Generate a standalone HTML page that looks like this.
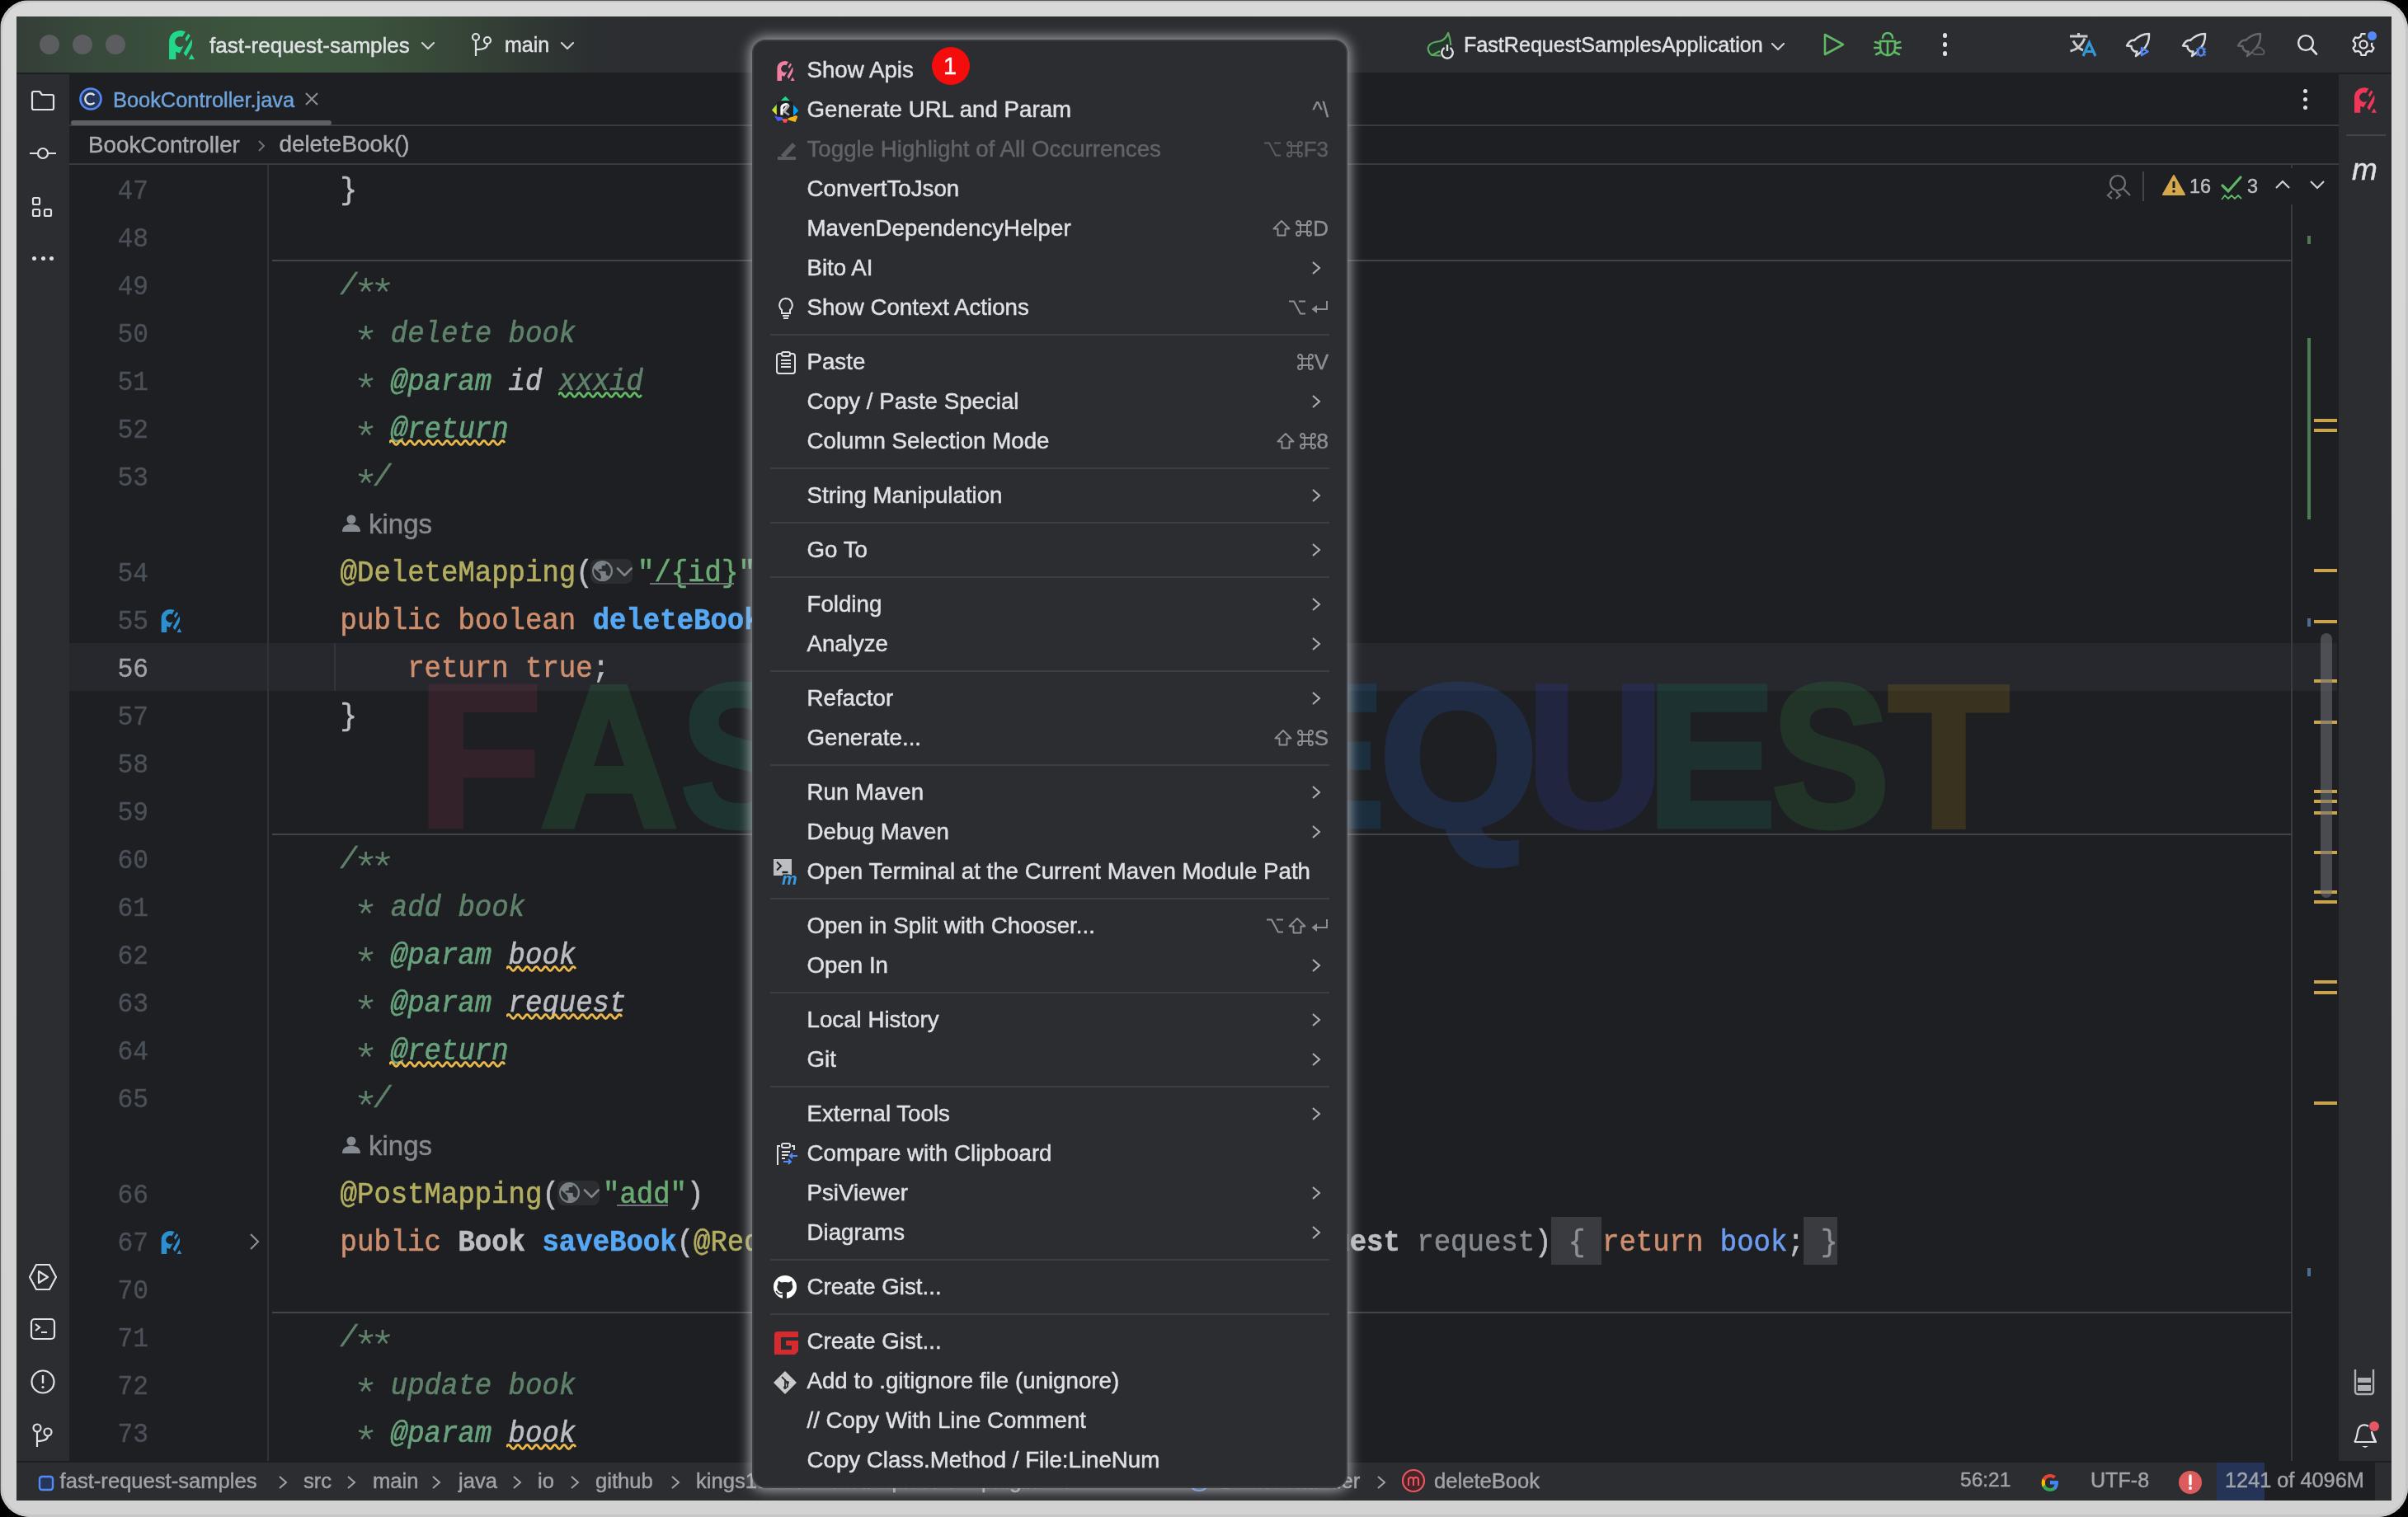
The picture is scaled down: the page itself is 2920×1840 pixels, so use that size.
<!DOCTYPE html>
<html><head><meta charset="utf-8"><style>
html,body{margin:0;padding:0;}
body{width:2920px;height:1840px;position:relative;overflow:hidden;background:#000;}
.r,.t,.s{position:absolute;}
#root{position:absolute;left:0;top:0;width:2920px;height:1840px;will-change:transform;}
.t{white-space:pre;line-height:1;-webkit-text-stroke-width:0.45px;}
.code{font-family:'Liberation Mono', monospace;font-size:36px;-webkit-text-stroke-width:0.6px;transform:scaleX(0.9443);transform-origin:0 0;}
</style></head><body><div id="root">
<div class="r" style="left:0;top:0;width:2920px;height:1840px;border-radius:36px;background:linear-gradient(#d8d8d8,#d2d2d2);box-shadow:inset 0 0 0 3px #c6c6c6"></div>
<div class="r" style="left:0px;top:0px;width:2920px;height:1px;background:rgba(0,0,0,0.55);"></div>
<div class="r" style="left:0px;top:0px;width:1px;height:1840px;background:rgba(0,0,0,0.55);"></div>
<div class="r" style="left:20px;top:20px;width:2880px;height:1800px;background:#1e1f22;"></div>
<div class="r" style="left:20px;top:20px;width:2880px;height:68px;background:linear-gradient(to right,#343e37 0px,#384a3b 100px,#3d573f 330px,#3b523d 430px,#374637 530px,#303934 620px,#2c2f31 700px,#2b2d30 760px,#2b2d30 100%)"></div>
<div class="r" style="left:20px;top:88px;width:2880px;height:2px;background:#1e1f22;"></div>
<div class="r" style="left:48px;top:42px;width:24px;height:24px;border-radius:50%;background:#5c5d60"></div>
<div class="r" style="left:88px;top:42px;width:24px;height:24px;border-radius:50%;background:#5c5d60"></div>
<div class="r" style="left:128px;top:42px;width:24px;height:24px;border-radius:50%;background:#5c5d60"></div>
<svg class="s" style="left:205px;top:37px" width="31" height="35" viewBox="0 0 30 34"><path fill="#21d789" d="M0 34 V13 C0 5 6 0 14 0 L19.3 1.3 L15.6 7.5 A6.2 6.2 0 1 0 17.2 17.8 L12.4 26.6 L8 25 V34 Z"/><path fill="#21d789" d="M22.6 3.7 L24.9 6 L20.6 13 L18.8 9.8 Z"/><path fill="#21d789" d="M26.6 10.1 C27.6 13 27.3 17 26 20 L20 30.7 L17.1 26.6 Z"/><path fill="#21d789" d="M23 34 L26.5 27.8 L30 34 Z"/></svg>
<div class="t" style="left:254.0px;top:41.5px;font-family:'Liberation Sans', sans-serif;font-size:26px;color:#dfe1e5;">fast-request-samples</div>
<svg class="s" style="left:511px;top:51px" width="16" height="9" viewBox="0 0 16 9"><path d="M1 1 L8.0 8 L15 1" fill="none" stroke="#cfd1d5" stroke-width="2.2" stroke-linecap="round" stroke-linejoin="round"/></svg>
<svg class="s" style="left:571px;top:39px" width="26" height="30" viewBox="0 0 26 30"><g fill="none" stroke="#dfe1e5" stroke-width="2.2"><circle cx="6" cy="6" r="4"/><circle cx="20" cy="10" r="4"/><path d="M6 10 V29 M20 14 C20 20 14 21 6 21"/></g></svg>
<div class="t" style="left:612.0px;top:42.3px;font-family:'Liberation Sans', sans-serif;font-size:25px;color:#dfe1e5;">main</div>
<svg class="s" style="left:680px;top:51px" width="16" height="9" viewBox="0 0 16 9"><path d="M1 1 L8.0 8 L15 1" fill="none" stroke="#cfd1d5" stroke-width="2.2" stroke-linecap="round" stroke-linejoin="round"/></svg>
<svg class="s" style="left:1725px;top:34px" width="50" height="42" viewBox="0 0 50 42"><path d="M11.5 33 C6 29 6 24 8 21 C11 17 16 16.5 21 16 C26 15 29 11 31.2 6 C33 11 34 16 34 21 L30 24 L22 28 C18 30 14 31.5 11.5 33 Z" fill="#22382a"/><path d="M22 33.5 L11.5 33 C6 29 6 24 8 21 C11 17 16 16.5 21 16 C26 15 29 11 31.2 6 C33 11 34 16 34.3 21" fill="none" stroke="#5fa864" stroke-width="2.2" stroke-linejoin="round"/><path d="M11.5 33 C15 31 18 29.5 21 28" fill="none" stroke="#5fa864" stroke-width="2.2"/><path d="M26.6 24 A6.8 6.8 0 1 0 33.4 24" fill="none" stroke="#dfe1e5" stroke-width="2.4"/><path d="M30 20 V28" stroke="#dfe1e5" stroke-width="2.4"/></svg>
<div class="t" style="left:1775.0px;top:42.2px;font-family:'Liberation Sans', sans-serif;font-size:25.1px;color:#dfe1e5;">FastRequestSamplesApplication</div>
<svg class="s" style="left:2148px;top:52px" width="16" height="9" viewBox="0 0 16 9"><path d="M1 1 L8.0 8 L15 1" fill="none" stroke="#cfd1d5" stroke-width="2.2" stroke-linecap="round" stroke-linejoin="round"/></svg>
<svg class="s" style="left:2209px;top:39px" width="30" height="30" viewBox="0 0 30 30"><path d="M4 3 L26 15 L4 27 Z" fill="none" stroke="#5fb865" stroke-width="2.6" stroke-linejoin="round"/></svg>
<svg class="s" style="left:2272px;top:38px" width="34" height="32" viewBox="0 0 34 32"><g fill="none" stroke="#5fb865" stroke-width="2.6" stroke-linecap="round"><path d="M11 8 A6 6 0 0 1 23 8"/><path d="M8 12 H26 V20 A9 9 0 0 1 8 20 Z"/><path d="M2 13 L8 15 M32 13 L26 15 M1 20 H8 M33 20 H26 M3 28 L9 25 M31 28 L25 25 M17 12 V29"/></g></svg>
<div class="r" style="left:2355.5px;top:40.2px;width:5.6px;height:5.6px;border-radius:50%;background:#dfe1e5"></div>
<div class="r" style="left:2355.5px;top:51.2px;width:5.6px;height:5.6px;border-radius:50%;background:#dfe1e5"></div>
<div class="r" style="left:2355.5px;top:62.2px;width:5.6px;height:5.6px;border-radius:50%;background:#dfe1e5"></div>
<svg class="s" style="left:2500px;top:32px" width="260" height="44" viewBox="0 0 260 44"><g fill="none" stroke="#c9cacd" stroke-width="3"><path d="M10 12 H31.5 M20.5 8 V12 M14 17.5 C17 23 21 27 26 29 M28 14.5 C25 22 19 28 10.5 30"/></g><path d="M26 36 L33.5 19.5 L41 36 M29 30.5 H38" fill="none" stroke="#3399d6" stroke-width="3.2"/><g fill="none" stroke-width="2.5" stroke-linejoin="round"><path d="M106 9 C100 9 93 12 88 17 C85 16 82 18 79 23.5 L84.5 24 L85 27 C87 30 89 31 91.5 30.5 L90 36 C94 33 96.5 31 97 30 C103 25 106.5 17 106 9 Z" stroke="#d7d8db"/><path d="M97 26 L104.5 30.5 L97 35 Z" stroke="#548af7"/><path d="M174 9 C168 9 161 12 156 17 C153 16 150 18 147 23.5 L152.5 24 L153 27 C155 30 157 31 159.5 30.5 L158 36 C162 33 164.5 31 165 30 C171 25 174.5 17 174 9 Z" stroke="#d7d8db"/><path d="M241 9 C235 9 228 12 223 17 C220 16 217 18 214 23.5 L219.5 24 L220 27 C222 30 224 31 226.5 30.5 L225 36 C229 33 231.5 31 232 30 C238 25 241.5 17 241 9 Z" stroke="#64666a"/></g><ellipse cx="169" cy="30.8" rx="3.5" ry="4.8" fill="#2b2d30" stroke="#548af7" stroke-width="2.2"/><path d="M163.3 27.5 H165.5 M163.3 31 H165.5 M163.3 34.5 H165.5 M172.5 27.5 H174.7 M172.5 31 H174.7 M172.5 34.5 H174.7 M166.5 24.8 L167.6 26.2 M171.5 24.8 L170.4 26.2" stroke="#548af7" stroke-width="1.8"/><path d="M234 34 H243 A3 3 0 0 0 243.5 28.2 A4.8 4.8 0 0 0 235 27.8 A3.2 3.2 0 0 0 234 34 Z" fill="#2b2d30" stroke="#58595d" stroke-width="2"/></svg>
<svg class="s" style="left:2776px;top:32px" width="40" height="44" viewBox="0 0 40 44"><circle cx="20" cy="20" r="8.9" fill="none" stroke="#dfe1e5" stroke-width="2.4"/><path d="M26.5 26.5 L33 33.5" stroke="#dfe1e5" stroke-width="2.6" stroke-linecap="round"/></svg>
<svg class="s" style="left:2850px;top:38px" width="32" height="32" viewBox="0 0 32 32"><path d="M12.51 6.42 L13.48 3.04 L18.52 3.04 L19.49 6.42 L22.56 8.19 L25.96 7.34 L28.48 11.70 L26.05 14.23 L26.05 17.77 L28.48 20.30 L25.96 24.66 L22.56 23.81 L19.49 25.58 L18.52 28.96 L13.48 28.96 L12.51 25.58 L9.44 23.81 L6.04 24.66 L3.52 20.30 L5.95 17.77 L5.95 14.23 L3.52 11.70 L6.04 7.34 L9.44 8.19 Z" fill="none" stroke="#dfe1e5" stroke-width="2.3" stroke-linejoin="round"/><circle cx="16" cy="16" r="4.6" fill="none" stroke="#dfe1e5" stroke-width="2.3"/></svg>
<div class="r" style="left:2868px;top:35px;width:17px;height:17px;border-radius:50%;background:#2b2d30"></div>
<div class="r" style="left:2870.8px;top:37.9px;width:11.2px;height:11.2px;border-radius:50%;background:#548af7"></div>
<div class="r" style="left:20px;top:90px;width:64px;height:1682px;background:#2b2d30;"></div>
<div class="r" style="left:2836px;top:90px;width:64px;height:1682px;background:#2b2d30;"></div>
<svg class="s" style="left:36px;top:108px" width="32" height="28" viewBox="0 0 32 28"><path d="M3 5 A2 2 0 0 1 5 3 H12 L15 7 H27 A2 2 0 0 1 29 9 V23 A2 2 0 0 1 27 25 H5 A2 2 0 0 1 3 23 Z" fill="none" stroke="#dfe1e5" stroke-width="2.2" stroke-linejoin="round"/></svg>
<svg class="s" style="left:34px;top:176px" width="36" height="20" viewBox="0 0 36 20"><circle cx="18" cy="10" r="6" fill="none" stroke="#dfe1e5" stroke-width="2.2"/><path d="M2 10 H12 M24 10 H34" stroke="#dfe1e5" stroke-width="2.2"/></svg>
<svg class="s" style="left:37px;top:237px" width="30" height="30" viewBox="0 0 30 30"><g fill="none" stroke="#dfe1e5" stroke-width="2.2"><rect x="3" y="3" width="8" height="8" rx="1.5"/><rect x="3" y="17" width="8" height="8" rx="1.5"/><rect x="17" y="17" width="8" height="8" rx="1.5"/></g></svg>
<div class="r" style="left:38.5px;top:311px;width:5px;height:5px;border-radius:50%;background:#dfe1e5"></div>
<div class="r" style="left:49.5px;top:311px;width:5px;height:5px;border-radius:50%;background:#dfe1e5"></div>
<div class="r" style="left:59.5px;top:311px;width:5px;height:5px;border-radius:50%;background:#dfe1e5"></div>
<svg class="s" style="left:34px;top:1532px" width="36" height="34" viewBox="0 0 36 34"><path d="M10 2 H26 L34 17 L26 32 H10 L2 17 Z" fill="none" stroke="#dfe1e5" stroke-width="2.2" stroke-linejoin="round"/><path d="M13 10 L24 17 L13 24 Z" fill="none" stroke="#dfe1e5" stroke-width="2.2" stroke-linejoin="round"/></svg>
<svg class="s" style="left:36px;top:1598px" width="32" height="28" viewBox="0 0 32 28"><rect x="2" y="2" width="28" height="24" rx="4" fill="none" stroke="#dfe1e5" stroke-width="2.2"/><path d="M7 8 L12 12 L7 16 M14 18 H21" fill="none" stroke="#dfe1e5" stroke-width="2.2"/></svg>
<svg class="s" style="left:36px;top:1660px" width="32" height="32" viewBox="0 0 32 32"><circle cx="16" cy="16" r="13.5" fill="none" stroke="#dfe1e5" stroke-width="2.2"/><path d="M16 8 V18" stroke="#dfe1e5" stroke-width="2.4"/><circle cx="16" cy="22.5" r="1.6" fill="#dfe1e5"/></svg>
<svg class="s" style="left:38px;top:1725px" width="28" height="32" viewBox="0 0 28 32"><g fill="none" stroke="#dfe1e5" stroke-width="2.2"><circle cx="7" cy="7" r="4.5"/><circle cx="20" cy="12" r="4.5"/><path d="M7 11.5 V30 M20 16.5 C20 22 14 23 7 23"/></g></svg>
<svg class="s" style="left:2855px;top:106px" width="27" height="31" viewBox="0 0 30 34"><path fill="#f0365a" d="M0 34 V13 C0 5 6 0 14 0 L19.3 1.3 L15.6 7.5 A6.2 6.2 0 1 0 17.2 17.8 L12.4 26.6 L8 25 V34 Z"/><path fill="#f0365a" d="M22.6 3.7 L24.9 6 L20.6 13 L18.8 9.8 Z"/><path fill="#f0365a" d="M26.6 10.1 C27.6 13 27.3 17 26 20 L20 30.7 L17.1 26.6 Z"/><path fill="#f0365a" d="M23 34 L26.5 27.8 L30 34 Z"/></svg>
<div class="r" style="left:2845px;top:163px;width:48px;height:2px;background:#43454a;"></div>
<div class="t" style="left:2852.0px;top:186.7px;font-family:'Liberation Sans', sans-serif;font-size:37px;color:#dfe1e5;font-style:italic">m</div>
<svg class="s" style="left:2852px;top:1659px" width="30" height="34" viewBox="0 0 30 34"><path d="M4 2 V29 A3 3 0 0 0 7 32 H23 A3 3 0 0 0 26 29 V2" fill="none" stroke="#aeb0b5" stroke-width="2.4"/><rect x="7" y="12" width="16" height="6" fill="#aeb0b5"/><rect x="7" y="21" width="16" height="7" fill="#aeb0b5"/></svg>
<svg class="s" style="left:2850px;top:1723px" width="36" height="36" viewBox="0 0 36 36"><path d="M5 26 C9 21 8 14 10 10 C12 5 18 4 22 7 M26 14 C27 20 28 23 31 26 Z M5 26 H31" fill="none" stroke="#dfe1e5" stroke-width="2.2" stroke-linejoin="round"/><path d="M14 31 H22 L18 33 Z" fill="#dfe1e5"/></svg>
<div class="r" style="left:2873px;top:1724px;width:12px;height:12px;border-radius:50%;background:#e55765"></div>
<div class="r" style="left:84px;top:151px;width:2752px;height:2px;background:#393b40;"></div>
<div class="r" style="left:86px;top:146px;width:316px;height:6px;border-radius:3px;background:#5d5f64"></div>
<svg class="s" style="left:95px;top:105px" width="30" height="30" viewBox="0 0 30 30"><circle cx="15" cy="15" r="12.5" fill="#253658" stroke="#548af7" stroke-width="2.6"/><path d="M19.5 10.5 A6.5 6.5 0 1 0 19.5 19.5" fill="none" stroke="#dfe1e5" stroke-width="2.4"/></svg>
<div class="t" style="left:137.0px;top:109.0px;font-family:'Liberation Sans', sans-serif;font-size:25.4px;color:#6fa3dc;">BookController.java</div>
<svg class="s" style="left:369px;top:111px" width="18" height="18" viewBox="0 0 18 18"><path d="M2 2 L16 16 M16 2 L2 16" stroke="#8c8f94" stroke-width="2"/></svg>
<div class="r" style="left:2793px;top:107.5px;width:5px;height:5px;border-radius:50%;background:#dfe1e5"></div>
<div class="r" style="left:2793px;top:117.5px;width:5px;height:5px;border-radius:50%;background:#dfe1e5"></div>
<div class="r" style="left:2793px;top:127.5px;width:5px;height:5px;border-radius:50%;background:#dfe1e5"></div>
<div class="t" style="left:107.0px;top:161.5px;font-family:'Liberation Sans', sans-serif;font-size:27.8px;color:#a9abb0;">BookController</div>
<svg class="s" style="left:311px;top:168px" width="12" height="18" viewBox="0 0 12 18"><path d="M3 3 L9 9 L3 15" fill="none" stroke="#6f7277" stroke-width="2"/></svg>
<div class="t" style="left:338.4px;top:161.4px;font-family:'Liberation Sans', sans-serif;font-size:27.9px;color:#a9abb0;">deleteBook()</div>
<div class="r" style="left:84px;top:198px;width:2752px;height:2px;background:#393b40;"></div>
<div class="r" style="left:84px;top:780px;width:2750px;height:58px;background:#26282e;"></div>
<div class="t" style="left:506px;top:793px;font-family:'Liberation Sans', sans-serif;font-weight:bold;font-size:254px;color:rgb(168,50,84);-webkit-text-stroke:7px rgb(168,50,84);opacity:0.16;transform:scale(0.970,0.967);transform-origin:13px 36px">F</div>
<div class="t" style="left:655px;top:793px;font-family:'Liberation Sans', sans-serif;font-weight:bold;font-size:254px;color:rgb(49,162,78);-webkit-text-stroke:7px rgb(49,162,78);opacity:0.16;transform:scale(0.911,0.967);transform-origin:1px 36px">A</div>
<div class="t" style="left:825px;top:793px;font-family:'Liberation Sans', sans-serif;font-weight:bold;font-size:254px;color:rgb(24,162,122);-webkit-text-stroke:7px rgb(24,162,122);opacity:0.16;transform:scale(0.843,0.967);transform-origin:3px 36px">S</div>
<div class="t" style="left:976px;top:793px;font-family:'Liberation Sans', sans-serif;font-weight:bold;font-size:254px;color:rgb(30,150,165);-webkit-text-stroke:7px rgb(30,150,165);opacity:0.16;transform:scale(0.942,0.967);transform-origin:-1px 36px">T</div>
<div class="t" style="left:1127px;top:793px;font-family:'Liberation Sans', sans-serif;font-weight:bold;font-size:254px;color:rgb(30,118,196);-webkit-text-stroke:7px rgb(30,118,196);opacity:0.16;transform:scale(0.941,0.967);transform-origin:13px 36px">R</div>
<div class="t" style="left:1522px;top:793px;font-family:'Liberation Sans', sans-serif;font-weight:bold;font-size:254px;color:rgb(11,125,209);-webkit-text-stroke:7px rgb(11,125,209);opacity:0.16;transform:scale(0.926,0.967);transform-origin:13px 36px">E</div>
<div class="t" style="left:1672px;top:793px;font-family:'Liberation Sans', sans-serif;font-weight:bold;font-size:254px;color:rgb(36,106,234);-webkit-text-stroke:7px rgb(36,106,234);opacity:0.16;transform:scale(0.978,0.967);transform-origin:7px 36px">Q</div>
<div class="t" style="left:1850px;top:793px;font-family:'Liberation Sans', sans-serif;font-weight:bold;font-size:254px;color:rgb(55,68,221);-webkit-text-stroke:7px rgb(55,68,221);opacity:0.16;transform:scale(0.905,0.967);transform-origin:12px 36px">U</div>
<div class="t" style="left:1996px;top:793px;font-family:'Liberation Sans', sans-serif;font-weight:bold;font-size:254px;color:rgb(18,144,122);-webkit-text-stroke:7px rgb(18,144,122);opacity:0.16;transform:scale(0.926,0.967);transform-origin:13px 36px">E</div>
<div class="t" style="left:2148px;top:793px;font-family:'Liberation Sans', sans-serif;font-weight:bold;font-size:254px;color:rgb(49,162,65);-webkit-text-stroke:7px rgb(49,162,65);opacity:0.16;transform:scale(0.843,0.967);transform-origin:3px 36px">S</div>
<div class="t" style="left:2290px;top:793px;font-family:'Liberation Sans', sans-serif;font-weight:bold;font-size:254px;color:rgb(192,150,15);-webkit-text-stroke:7px rgb(192,150,15);opacity:0.16;transform:scale(0.942,0.967);transform-origin:-1px 36px">T</div>
<div class="r" style="left:324px;top:200px;width:2px;height:1572px;background:#313338;"></div>
<div class="r" style="left:2778px;top:248px;width:2px;height:1524px;background:#393b40;"></div>
<div class="r" style="left:2778px;top:199px;width:2px;height:5px;background:#393b40;"></div>
<div class="r" style="left:330px;top:315px;width:2449px;height:2px;background:#43454a;"></div>
<div class="r" style="left:330px;top:1011px;width:2449px;height:2px;background:#43454a;"></div>
<div class="r" style="left:330px;top:1591px;width:2449px;height:2px;background:#43454a;"></div>
<div class="t" style="left:100px;width:80px;text-align:right;top:215.0px;font-family:'Liberation Mono', monospace;font-size:34px;color:#4b5059;-webkit-text-stroke-width:0.4px;transform:scaleX(0.92);transform-origin:100% 0">47</div>
<div class="t" style="left:100px;width:80px;text-align:right;top:273.0px;font-family:'Liberation Mono', monospace;font-size:34px;color:#4b5059;-webkit-text-stroke-width:0.4px;transform:scaleX(0.92);transform-origin:100% 0">48</div>
<div class="t" style="left:100px;width:80px;text-align:right;top:331.0px;font-family:'Liberation Mono', monospace;font-size:34px;color:#4b5059;-webkit-text-stroke-width:0.4px;transform:scaleX(0.92);transform-origin:100% 0">49</div>
<div class="t" style="left:100px;width:80px;text-align:right;top:389.0px;font-family:'Liberation Mono', monospace;font-size:34px;color:#4b5059;-webkit-text-stroke-width:0.4px;transform:scaleX(0.92);transform-origin:100% 0">50</div>
<div class="t" style="left:100px;width:80px;text-align:right;top:447.0px;font-family:'Liberation Mono', monospace;font-size:34px;color:#4b5059;-webkit-text-stroke-width:0.4px;transform:scaleX(0.92);transform-origin:100% 0">51</div>
<div class="t" style="left:100px;width:80px;text-align:right;top:505.0px;font-family:'Liberation Mono', monospace;font-size:34px;color:#4b5059;-webkit-text-stroke-width:0.4px;transform:scaleX(0.92);transform-origin:100% 0">52</div>
<div class="t" style="left:100px;width:80px;text-align:right;top:563.0px;font-family:'Liberation Mono', monospace;font-size:34px;color:#4b5059;-webkit-text-stroke-width:0.4px;transform:scaleX(0.92);transform-origin:100% 0">53</div>
<div class="t" style="left:100px;width:80px;text-align:right;top:679.0px;font-family:'Liberation Mono', monospace;font-size:34px;color:#4b5059;-webkit-text-stroke-width:0.4px;transform:scaleX(0.92);transform-origin:100% 0">54</div>
<div class="t" style="left:100px;width:80px;text-align:right;top:737.0px;font-family:'Liberation Mono', monospace;font-size:34px;color:#4b5059;-webkit-text-stroke-width:0.4px;transform:scaleX(0.92);transform-origin:100% 0">55</div>
<div class="t" style="left:100px;width:80px;text-align:right;top:795.0px;font-family:'Liberation Mono', monospace;font-size:34px;color:#a1a3ab;-webkit-text-stroke-width:0.4px;transform:scaleX(0.92);transform-origin:100% 0">56</div>
<div class="t" style="left:100px;width:80px;text-align:right;top:853.0px;font-family:'Liberation Mono', monospace;font-size:34px;color:#4b5059;-webkit-text-stroke-width:0.4px;transform:scaleX(0.92);transform-origin:100% 0">57</div>
<div class="t" style="left:100px;width:80px;text-align:right;top:911.0px;font-family:'Liberation Mono', monospace;font-size:34px;color:#4b5059;-webkit-text-stroke-width:0.4px;transform:scaleX(0.92);transform-origin:100% 0">58</div>
<div class="t" style="left:100px;width:80px;text-align:right;top:969.0px;font-family:'Liberation Mono', monospace;font-size:34px;color:#4b5059;-webkit-text-stroke-width:0.4px;transform:scaleX(0.92);transform-origin:100% 0">59</div>
<div class="t" style="left:100px;width:80px;text-align:right;top:1027.0px;font-family:'Liberation Mono', monospace;font-size:34px;color:#4b5059;-webkit-text-stroke-width:0.4px;transform:scaleX(0.92);transform-origin:100% 0">60</div>
<div class="t" style="left:100px;width:80px;text-align:right;top:1085.0px;font-family:'Liberation Mono', monospace;font-size:34px;color:#4b5059;-webkit-text-stroke-width:0.4px;transform:scaleX(0.92);transform-origin:100% 0">61</div>
<div class="t" style="left:100px;width:80px;text-align:right;top:1143.0px;font-family:'Liberation Mono', monospace;font-size:34px;color:#4b5059;-webkit-text-stroke-width:0.4px;transform:scaleX(0.92);transform-origin:100% 0">62</div>
<div class="t" style="left:100px;width:80px;text-align:right;top:1201.0px;font-family:'Liberation Mono', monospace;font-size:34px;color:#4b5059;-webkit-text-stroke-width:0.4px;transform:scaleX(0.92);transform-origin:100% 0">63</div>
<div class="t" style="left:100px;width:80px;text-align:right;top:1259.0px;font-family:'Liberation Mono', monospace;font-size:34px;color:#4b5059;-webkit-text-stroke-width:0.4px;transform:scaleX(0.92);transform-origin:100% 0">64</div>
<div class="t" style="left:100px;width:80px;text-align:right;top:1317.0px;font-family:'Liberation Mono', monospace;font-size:34px;color:#4b5059;-webkit-text-stroke-width:0.4px;transform:scaleX(0.92);transform-origin:100% 0">65</div>
<div class="t" style="left:100px;width:80px;text-align:right;top:1433.0px;font-family:'Liberation Mono', monospace;font-size:34px;color:#4b5059;-webkit-text-stroke-width:0.4px;transform:scaleX(0.92);transform-origin:100% 0">66</div>
<div class="t" style="left:100px;width:80px;text-align:right;top:1491.0px;font-family:'Liberation Mono', monospace;font-size:34px;color:#4b5059;-webkit-text-stroke-width:0.4px;transform:scaleX(0.92);transform-origin:100% 0">67</div>
<div class="t" style="left:100px;width:80px;text-align:right;top:1549.0px;font-family:'Liberation Mono', monospace;font-size:34px;color:#4b5059;-webkit-text-stroke-width:0.4px;transform:scaleX(0.92);transform-origin:100% 0">70</div>
<div class="t" style="left:100px;width:80px;text-align:right;top:1607.0px;font-family:'Liberation Mono', monospace;font-size:34px;color:#4b5059;-webkit-text-stroke-width:0.4px;transform:scaleX(0.92);transform-origin:100% 0">71</div>
<div class="t" style="left:100px;width:80px;text-align:right;top:1665.0px;font-family:'Liberation Mono', monospace;font-size:34px;color:#4b5059;-webkit-text-stroke-width:0.4px;transform:scaleX(0.92);transform-origin:100% 0">72</div>
<div class="t" style="left:100px;width:80px;text-align:right;top:1723.0px;font-family:'Liberation Mono', monospace;font-size:34px;color:#4b5059;-webkit-text-stroke-width:0.4px;transform:scaleX(0.92);transform-origin:100% 0">73</div>
<div class="t code" style="left:331.4px;top:214.4px"><span style="color:#bcbec4;">    }</span></div>
<div class="t code" style="left:331.4px;top:330.4px"><span style="color:#5f826b;font-style:italic">    /  </span></div>
<div class="t code" style="left:331.4px;top:388.4px"><span style="color:#5f826b;font-style:italic">       delete book</span></div>
<div class="t code" style="left:331.4px;top:446.4px"><span style="color:#5f826b;font-style:italic">       </span><span style="color:#67a37c;font-style:italic">@param</span><span style="color:#5f826b;"> </span><span style="color:#bcbec4;font-style:italic">id</span><span style="color:#5f826b;"> </span><span style="color:#5f826b;font-style:italic">xxxid</span></div>
<div class="t code" style="left:331.4px;top:504.4px"><span style="color:#5f826b;font-style:italic">       </span><span style="color:#67a37c;font-style:italic">@return</span></div>
<div class="t code" style="left:331.4px;top:562.4px"><span style="color:#5f826b;font-style:italic">      /</span></div>
<div class="t code" style="left:331.4px;top:678.4px"><span style="color:#b3ae60;">    @DeleteMapping</span><span style="color:#bcbec4;">(</span></div>
<div class="t code" style="left:773px;top:678.4px"><span style="color:#6aab73">"/{id}"</span><span style="color:#bcbec4">)</span></div>
<div class="t code" style="left:331.4px;top:736.4px"><span style="color:#cf8e6d;">    public</span><span style="color:#bcbec4;"> </span><span style="color:#cf8e6d;">boolean</span><span style="color:#bcbec4;"> </span><span style="color:#56a8f5;font-weight:bold">deleteBook</span><span style="color:#bcbec4;">(@PathVariable Long id) {</span></div>
<div class="t code" style="left:331.4px;top:794.4px"><span style="color:#cf8e6d;">        return</span><span style="color:#bcbec4;"> </span><span style="color:#cf8e6d;">true</span><span style="color:#bcbec4;">;</span></div>
<div class="t code" style="left:331.4px;top:852.4px"><span style="color:#bcbec4;">    }</span></div>
<div class="t code" style="left:331.4px;top:1026.4px"><span style="color:#5f826b;font-style:italic">    /  </span></div>
<div class="t code" style="left:331.4px;top:1084.4px"><span style="color:#5f826b;font-style:italic">       add book</span></div>
<div class="t code" style="left:331.4px;top:1142.4px"><span style="color:#5f826b;font-style:italic">       </span><span style="color:#67a37c;font-style:italic">@param</span><span style="color:#5f826b;"> </span><span style="color:#bcbec4;font-style:italic">book</span></div>
<div class="t code" style="left:331.4px;top:1200.4px"><span style="color:#5f826b;font-style:italic">       </span><span style="color:#67a37c;font-style:italic">@param</span><span style="color:#5f826b;"> </span><span style="color:#bcbec4;font-style:italic">request</span></div>
<div class="t code" style="left:331.4px;top:1258.4px"><span style="color:#5f826b;font-style:italic">       </span><span style="color:#67a37c;font-style:italic">@return</span></div>
<div class="t code" style="left:331.4px;top:1316.4px"><span style="color:#5f826b;font-style:italic">      /</span></div>
<div class="t code" style="left:331.4px;top:1432.4px"><span style="color:#b3ae60;">    @PostMapping</span><span style="color:#bcbec4;">(</span></div>
<div class="t code" style="left:731px;top:1432.4px"><span style="color:#6aab73">"add"</span><span style="color:#bcbec4">)</span></div>
<div class="t code" style="left:331.4px;top:1490.4px"><span style="color:#cf8e6d;">    public</span><span style="color:#bcbec4;"> </span><span style="color:#bcbec4;font-weight:bold">Book</span><span style="color:#bcbec4;"> </span><span style="color:#56a8f5;font-weight:bold">saveBook</span><span style="color:#bcbec4;">(</span><span style="color:#b3ae60;">@RequestBody</span><span style="color:#bcbec4;"> Book book, </span><span style="color:#bcbec4;font-weight:bold">HttpServletRequest</span><span style="color:#bcbec4;"> </span><span style="color:#868a91;">request</span><span style="color:#bcbec4;">)</span></div>
<div class="r" style="left:1881px;top:1476px;width:61px;height:58px;background:#393b40;"></div>
<div class="r" style="left:2187px;top:1476px;width:41px;height:58px;background:#393b40;"></div>
<div class="t code" style="left:1902.2px;top:1490.4px"><span style="color:#8c8f94;">{</span></div>
<div class="t code" style="left:1943.0px;top:1490.4px"><span style="color:#cf8e6d;">return</span><span style="color:#bcbec4;"> </span><span style="color:#6d9cf0;">book</span><span style="color:#bcbec4;">;</span></div>
<div class="t code" style="left:2208.2px;top:1490.4px"><span style="color:#8c8f94;">}</span></div>
<div class="t code" style="left:331.4px;top:1606.4px"><span style="color:#5f826b;font-style:italic">    /  </span></div>
<div class="t code" style="left:331.4px;top:1664.4px"><span style="color:#5f826b;font-style:italic">       update book</span></div>
<div class="t code" style="left:331.4px;top:1722.4px"><span style="color:#5f826b;font-style:italic">       </span><span style="color:#67a37c;font-style:italic">@param</span><span style="color:#5f826b;"> </span><span style="color:#bcbec4;font-style:italic">book</span></div>
<svg class="s" style="left:431px;top:334px" width="24" height="24" viewBox="0 0 24 24"><g transform="translate(12.60,12.00)"><path d="M0 0 V-9 M0 0 L8.6 -2.8 M0 0 L5.3 7.3 M0 0 L-5.3 7.3 M0 0 L-8.6 -2.8" stroke="#5f826b" stroke-width="2.7"/></g></svg>
<svg class="s" style="left:452px;top:334px" width="24" height="24" viewBox="0 0 24 24"><g transform="translate(12.00,12.00)"><path d="M0 0 V-9 M0 0 L8.6 -2.8 M0 0 L5.3 7.3 M0 0 L-5.3 7.3 M0 0 L-8.6 -2.8" stroke="#5f826b" stroke-width="2.7"/></g></svg>
<svg class="s" style="left:431px;top:392px" width="24" height="24" viewBox="0 0 24 24"><g transform="translate(12.60,12.00)"><path d="M0 0 V-9 M0 0 L8.6 -2.8 M0 0 L5.3 7.3 M0 0 L-5.3 7.3 M0 0 L-8.6 -2.8" stroke="#5f826b" stroke-width="2.7"/></g></svg>
<svg class="s" style="left:431px;top:450px" width="24" height="24" viewBox="0 0 24 24"><g transform="translate(12.60,12.00)"><path d="M0 0 V-9 M0 0 L8.6 -2.8 M0 0 L5.3 7.3 M0 0 L-5.3 7.3 M0 0 L-8.6 -2.8" stroke="#5f826b" stroke-width="2.7"/></g></svg>
<svg class="s" style="left:431px;top:508px" width="24" height="24" viewBox="0 0 24 24"><g transform="translate(12.60,12.00)"><path d="M0 0 V-9 M0 0 L8.6 -2.8 M0 0 L5.3 7.3 M0 0 L-5.3 7.3 M0 0 L-8.6 -2.8" stroke="#5f826b" stroke-width="2.7"/></g></svg>
<svg class="s" style="left:431px;top:566px" width="24" height="24" viewBox="0 0 24 24"><g transform="translate(12.60,12.00)"><path d="M0 0 V-9 M0 0 L8.6 -2.8 M0 0 L5.3 7.3 M0 0 L-5.3 7.3 M0 0 L-8.6 -2.8" stroke="#5f826b" stroke-width="2.7"/></g></svg>
<svg class="s" style="left:431px;top:1030px" width="24" height="24" viewBox="0 0 24 24"><g transform="translate(12.60,12.00)"><path d="M0 0 V-9 M0 0 L8.6 -2.8 M0 0 L5.3 7.3 M0 0 L-5.3 7.3 M0 0 L-8.6 -2.8" stroke="#5f826b" stroke-width="2.7"/></g></svg>
<svg class="s" style="left:452px;top:1030px" width="24" height="24" viewBox="0 0 24 24"><g transform="translate(12.00,12.00)"><path d="M0 0 V-9 M0 0 L8.6 -2.8 M0 0 L5.3 7.3 M0 0 L-5.3 7.3 M0 0 L-8.6 -2.8" stroke="#5f826b" stroke-width="2.7"/></g></svg>
<svg class="s" style="left:431px;top:1088px" width="24" height="24" viewBox="0 0 24 24"><g transform="translate(12.60,12.00)"><path d="M0 0 V-9 M0 0 L8.6 -2.8 M0 0 L5.3 7.3 M0 0 L-5.3 7.3 M0 0 L-8.6 -2.8" stroke="#5f826b" stroke-width="2.7"/></g></svg>
<svg class="s" style="left:431px;top:1146px" width="24" height="24" viewBox="0 0 24 24"><g transform="translate(12.60,12.00)"><path d="M0 0 V-9 M0 0 L8.6 -2.8 M0 0 L5.3 7.3 M0 0 L-5.3 7.3 M0 0 L-8.6 -2.8" stroke="#5f826b" stroke-width="2.7"/></g></svg>
<svg class="s" style="left:431px;top:1204px" width="24" height="24" viewBox="0 0 24 24"><g transform="translate(12.60,12.00)"><path d="M0 0 V-9 M0 0 L8.6 -2.8 M0 0 L5.3 7.3 M0 0 L-5.3 7.3 M0 0 L-8.6 -2.8" stroke="#5f826b" stroke-width="2.7"/></g></svg>
<svg class="s" style="left:431px;top:1262px" width="24" height="24" viewBox="0 0 24 24"><g transform="translate(12.60,12.00)"><path d="M0 0 V-9 M0 0 L8.6 -2.8 M0 0 L5.3 7.3 M0 0 L-5.3 7.3 M0 0 L-8.6 -2.8" stroke="#5f826b" stroke-width="2.7"/></g></svg>
<svg class="s" style="left:431px;top:1320px" width="24" height="24" viewBox="0 0 24 24"><g transform="translate(12.60,12.00)"><path d="M0 0 V-9 M0 0 L8.6 -2.8 M0 0 L5.3 7.3 M0 0 L-5.3 7.3 M0 0 L-8.6 -2.8" stroke="#5f826b" stroke-width="2.7"/></g></svg>
<svg class="s" style="left:431px;top:1610px" width="24" height="24" viewBox="0 0 24 24"><g transform="translate(12.60,12.00)"><path d="M0 0 V-9 M0 0 L8.6 -2.8 M0 0 L5.3 7.3 M0 0 L-5.3 7.3 M0 0 L-8.6 -2.8" stroke="#5f826b" stroke-width="2.7"/></g></svg>
<svg class="s" style="left:452px;top:1610px" width="24" height="24" viewBox="0 0 24 24"><g transform="translate(12.00,12.00)"><path d="M0 0 V-9 M0 0 L8.6 -2.8 M0 0 L5.3 7.3 M0 0 L-5.3 7.3 M0 0 L-8.6 -2.8" stroke="#5f826b" stroke-width="2.7"/></g></svg>
<svg class="s" style="left:431px;top:1668px" width="24" height="24" viewBox="0 0 24 24"><g transform="translate(12.60,12.00)"><path d="M0 0 V-9 M0 0 L8.6 -2.8 M0 0 L5.3 7.3 M0 0 L-5.3 7.3 M0 0 L-8.6 -2.8" stroke="#5f826b" stroke-width="2.7"/></g></svg>
<svg class="s" style="left:431px;top:1726px" width="24" height="24" viewBox="0 0 24 24"><g transform="translate(12.60,12.00)"><path d="M0 0 V-9 M0 0 L8.6 -2.8 M0 0 L5.3 7.3 M0 0 L-5.3 7.3 M0 0 L-8.6 -2.8" stroke="#5f826b" stroke-width="2.7"/></g></svg>
<svg class="s" style="left:677px;top:473.5px" width="103" height="10" viewBox="0 0 103 10"><path d="M0 5 Q2.8 0 5.6 5 Q8.4 10 11.2 5 Q14.0 0 16.8 5 Q19.6 10 22.4 5 Q25.2 0 28.0 5 Q30.8 10 33.6 5 Q36.4 0 39.2 5 Q42.0 10 44.8 5 Q47.6 0 50.4 5 Q53.2 10 56.0 5 Q58.8 0 61.6 5 Q64.4 10 67.2 5 Q70.0 0 72.8 5 Q75.6 10 78.4 5 Q81.2 0 84.0 5 Q86.8 10 89.6 5 Q92.4 0 95.2 5 Q98.0 10 100.8 5" fill="none" stroke="#62b866" stroke-width="2.8"/></svg>
<svg class="s" style="left:472px;top:531.5px" width="144" height="10" viewBox="0 0 144 10"><path d="M0 5 Q2.8 0 5.6 5 Q8.4 10 11.2 5 Q14.0 0 16.8 5 Q19.6 10 22.4 5 Q25.2 0 28.0 5 Q30.8 10 33.6 5 Q36.4 0 39.2 5 Q42.0 10 44.8 5 Q47.6 0 50.4 5 Q53.2 10 56.0 5 Q58.8 0 61.6 5 Q64.4 10 67.2 5 Q70.0 0 72.8 5 Q75.6 10 78.4 5 Q81.2 0 84.0 5 Q86.8 10 89.6 5 Q92.4 0 95.2 5 Q98.0 10 100.8 5 Q103.6 0 106.4 5 Q109.2 10 112.0 5 Q114.8 0 117.6 5 Q120.4 10 123.2 5 Q126.0 0 128.8 5 Q131.6 10 134.4 5 Q137.2 0 140.0 5" fill="none" stroke="#e8b84a" stroke-width="2.8"/></svg>
<svg class="s" style="left:614px;top:1169.5px" width="86" height="10" viewBox="0 0 86 10"><path d="M0 5 Q2.8 0 5.6 5 Q8.4 10 11.2 5 Q14.0 0 16.8 5 Q19.6 10 22.4 5 Q25.2 0 28.0 5 Q30.8 10 33.6 5 Q36.4 0 39.2 5 Q42.0 10 44.8 5 Q47.6 0 50.4 5 Q53.2 10 56.0 5 Q58.8 0 61.6 5 Q64.4 10 67.2 5 Q70.0 0 72.8 5 Q75.6 10 78.4 5 Q81.2 0 84.0 5" fill="none" stroke="#e8b84a" stroke-width="2.8"/></svg>
<svg class="s" style="left:614px;top:1227.5px" width="147" height="10" viewBox="0 0 147 10"><path d="M0 5 Q2.8 0 5.6 5 Q8.4 10 11.2 5 Q14.0 0 16.8 5 Q19.6 10 22.4 5 Q25.2 0 28.0 5 Q30.8 10 33.6 5 Q36.4 0 39.2 5 Q42.0 10 44.8 5 Q47.6 0 50.4 5 Q53.2 10 56.0 5 Q58.8 0 61.6 5 Q64.4 10 67.2 5 Q70.0 0 72.8 5 Q75.6 10 78.4 5 Q81.2 0 84.0 5 Q86.8 10 89.6 5 Q92.4 0 95.2 5 Q98.0 10 100.8 5 Q103.6 0 106.4 5 Q109.2 10 112.0 5 Q114.8 0 117.6 5 Q120.4 10 123.2 5 Q126.0 0 128.8 5 Q131.6 10 134.4 5 Q137.2 0 140.0 5" fill="none" stroke="#e8b84a" stroke-width="2.8"/></svg>
<svg class="s" style="left:472px;top:1285.5px" width="144" height="10" viewBox="0 0 144 10"><path d="M0 5 Q2.8 0 5.6 5 Q8.4 10 11.2 5 Q14.0 0 16.8 5 Q19.6 10 22.4 5 Q25.2 0 28.0 5 Q30.8 10 33.6 5 Q36.4 0 39.2 5 Q42.0 10 44.8 5 Q47.6 0 50.4 5 Q53.2 10 56.0 5 Q58.8 0 61.6 5 Q64.4 10 67.2 5 Q70.0 0 72.8 5 Q75.6 10 78.4 5 Q81.2 0 84.0 5 Q86.8 10 89.6 5 Q92.4 0 95.2 5 Q98.0 10 100.8 5 Q103.6 0 106.4 5 Q109.2 10 112.0 5 Q114.8 0 117.6 5 Q120.4 10 123.2 5 Q126.0 0 128.8 5 Q131.6 10 134.4 5 Q137.2 0 140.0 5" fill="none" stroke="#e8b84a" stroke-width="2.8"/></svg>
<svg class="s" style="left:614px;top:1749.5px" width="86" height="10" viewBox="0 0 86 10"><path d="M0 5 Q2.8 0 5.6 5 Q8.4 10 11.2 5 Q14.0 0 16.8 5 Q19.6 10 22.4 5 Q25.2 0 28.0 5 Q30.8 10 33.6 5 Q36.4 0 39.2 5 Q42.0 10 44.8 5 Q47.6 0 50.4 5 Q53.2 10 56.0 5 Q58.8 0 61.6 5 Q64.4 10 67.2 5 Q70.0 0 72.8 5 Q75.6 10 78.4 5 Q81.2 0 84.0 5" fill="none" stroke="#e8b84a" stroke-width="2.8"/></svg>
<div class="r" style="left:788px;top:707px;width:102px;height:2px;background:#6f7277;"></div>
<div class="r" style="left:748px;top:1461px;width:62px;height:2px;background:#6f7277;"></div>
<svg class="s" style="left:414px;top:623px" width="24" height="24" viewBox="0 0 24 24"><circle cx="12" cy="7" r="5.5" fill="#868a91"/><path d="M1 22 C1 15 6 13 12 13 C18 13 23 15 23 22 Z" fill="#868a91"/></svg>
<div class="t" style="left:447.0px;top:619.1px;font-family:'Liberation Sans', sans-serif;font-size:33px;color:#868a91;">kings</div>
<svg class="s" style="left:414px;top:1377px" width="24" height="24" viewBox="0 0 24 24"><circle cx="12" cy="7" r="5.5" fill="#868a91"/><path d="M1 22 C1 15 6 13 12 13 C18 13 23 15 23 22 Z" fill="#868a91"/></svg>
<div class="t" style="left:447.0px;top:1373.1px;font-family:'Liberation Sans', sans-serif;font-size:33px;color:#868a91;">kings</div>
<div class="r" style="left:716px;top:678px;width:51px;height:30px;border-radius:8px;background:#2b2d30"></div>
<svg class="s" style="left:716px;top:678px" width="51" height="30" viewBox="0 0 51 30"><circle cx="14.6" cy="14.6" r="10.6" fill="#7a8288"/><circle cx="14.6" cy="14.6" r="11.4" fill="none" stroke="#7a8288" stroke-width="2.2"/><path d="M18.8 5.3 L18 7.7 L13.8 8.2 L13.8 12.2 L9.8 12.2 L9.8 14.6 L18.8 15.1 L18.8 19.3 L22.5 20.9 A10.3 10.3 0 0 0 18.8 5.3 Z" fill="#2b2d30"/><path d="M4.6 11.5 L11.5 17.5 L13 21.5 L12.4 24.6 A10.3 10.3 0 0 1 4.6 11.5 Z" fill="#2b2d30"/><path d="M33 11.5 L41.3 19.8 L49.6 11.5" fill="none" stroke="#7f878d" stroke-width="2.6" stroke-linecap="round" stroke-linejoin="round"/></svg>
<div class="r" style="left:676px;top:1432px;width:51px;height:30px;border-radius:8px;background:#2b2d30"></div>
<svg class="s" style="left:676px;top:1432px" width="51" height="30" viewBox="0 0 51 30"><circle cx="14.6" cy="14.6" r="10.6" fill="#7a8288"/><circle cx="14.6" cy="14.6" r="11.4" fill="none" stroke="#7a8288" stroke-width="2.2"/><path d="M18.8 5.3 L18 7.7 L13.8 8.2 L13.8 12.2 L9.8 12.2 L9.8 14.6 L18.8 15.1 L18.8 19.3 L22.5 20.9 A10.3 10.3 0 0 0 18.8 5.3 Z" fill="#2b2d30"/><path d="M4.6 11.5 L11.5 17.5 L13 21.5 L12.4 24.6 A10.3 10.3 0 0 1 4.6 11.5 Z" fill="#2b2d30"/><path d="M33 11.5 L41.3 19.8 L49.6 11.5" fill="none" stroke="#7f878d" stroke-width="2.6" stroke-linecap="round" stroke-linejoin="round"/></svg>
<svg class="s" style="left:195px;top:739px" width="26" height="28" viewBox="0 0 30 34"><path fill="#2b8fd0" d="M0 34 V13 C0 5 6 0 14 0 L19.3 1.3 L15.6 7.5 A6.2 6.2 0 1 0 17.2 17.8 L12.4 26.6 L8 25 V34 Z"/><path fill="#2b8fd0" d="M22.6 3.7 L24.9 6 L20.6 13 L18.8 9.8 Z"/><path fill="#2b8fd0" d="M26.6 10.1 C27.6 13 27.3 17 26 20 L20 30.7 L17.1 26.6 Z"/><path fill="#2b8fd0" d="M23 34 L26.5 27.8 L30 34 Z"/></svg>
<svg class="s" style="left:195px;top:1493px" width="26" height="28" viewBox="0 0 30 34"><path fill="#2b8fd0" d="M0 34 V13 C0 5 6 0 14 0 L19.3 1.3 L15.6 7.5 A6.2 6.2 0 1 0 17.2 17.8 L12.4 26.6 L8 25 V34 Z"/><path fill="#2b8fd0" d="M22.6 3.7 L24.9 6 L20.6 13 L18.8 9.8 Z"/><path fill="#2b8fd0" d="M26.6 10.1 C27.6 13 27.3 17 26 20 L20 30.7 L17.1 26.6 Z"/><path fill="#2b8fd0" d="M23 34 L26.5 27.8 L30 34 Z"/></svg>
<svg class="s" style="left:301px;top:1494px" width="16" height="24" viewBox="0 0 16 24"><path d="M3 3 L12 12 L3 21" fill="none" stroke="#8c8f94" stroke-width="2.2"/></svg>
<div class="r" style="left:405px;top:780px;width:2px;height:58px;background:#34363b;"></div>
<svg class="s" style="left:2553px;top:210px" width="34" height="34" viewBox="0 0 34 34"><g fill="none" stroke="#6f7277" stroke-width="2.2"><circle cx="15" cy="12" r="9"/><path d="M22 19 L30 27 M8 22 L3 27 L8 31 M13 22 L18 27 L13 31"/></g></svg>
<div class="r" style="left:2598px;top:208px;width:2px;height:36px;background:#43454a;"></div>
<svg class="s" style="left:2622px;top:212px" width="28" height="26" viewBox="0 0 28 26"><path d="M14 1 L27 24 H1 Z" fill="#d6a84c" stroke="#d6a84c" stroke-width="2" stroke-linejoin="round"/><path d="M14 8 V16" stroke="#1e1f22" stroke-width="3"/><circle cx="14" cy="20" r="1.8" fill="#1e1f22"/></svg>
<div class="t" style="left:2655.0px;top:215.1px;font-family:'Liberation Sans', sans-serif;font-size:23.5px;color:#bcbec4;">16</div>
<svg class="s" style="left:2692px;top:212px" width="30" height="32" viewBox="0 0 30 32"><path d="M3 13 L10 20 L25 3" fill="none" stroke="#5fb865" stroke-width="3.2" stroke-linecap="round"/><path d="M2 30 L6 25 L10 29 L14 25 L18 29 L22 25 L26 29" fill="none" stroke="#5fb865" stroke-width="1.8"/></svg>
<div class="t" style="left:2725.0px;top:215.1px;font-family:'Liberation Sans', sans-serif;font-size:23.5px;color:#bcbec4;">3</div>
<svg class="s" style="left:2758px;top:218px" width="20" height="12" viewBox="0 0 20 12"><path d="M2 10 L10 2 L18 10" fill="none" stroke="#cfd1d5" stroke-width="2.2"/></svg>
<svg class="s" style="left:2800px;top:218px" width="20" height="12" viewBox="0 0 20 12"><path d="M2 2 L10 10 L18 2" fill="none" stroke="#cfd1d5" stroke-width="2.2"/></svg>
<div class="r" style="left:2798px;top:286px;width:4px;height:10px;background:#4e7a57;"></div>
<div class="r" style="left:2798px;top:410px;width:4px;height:220px;background:#4e7a57;"></div>
<div class="r" style="left:2798px;top:750px;width:4px;height:10px;background:#4e6d96;"></div>
<div class="r" style="left:2798px;top:1538px;width:4px;height:10px;background:#4e6d96;"></div>
<div class="r" style="left:2806px;top:508px;width:28px;height:4px;background:#c9a34e;"></div>
<div class="r" style="left:2806px;top:520px;width:28px;height:4px;background:#c9a34e;"></div>
<div class="r" style="left:2806px;top:690px;width:28px;height:4px;background:#c9a34e;"></div>
<div class="r" style="left:2806px;top:752px;width:28px;height:4px;background:#c9a34e;"></div>
<div class="r" style="left:2806px;top:824px;width:28px;height:4px;background:#c9a34e;"></div>
<div class="r" style="left:2806px;top:874px;width:28px;height:4px;background:#c9a34e;"></div>
<div class="r" style="left:2806px;top:958px;width:28px;height:4px;background:#c9a34e;"></div>
<div class="r" style="left:2806px;top:970px;width:28px;height:4px;background:#c9a34e;"></div>
<div class="r" style="left:2806px;top:984px;width:28px;height:4px;background:#c9a34e;"></div>
<div class="r" style="left:2806px;top:1032px;width:28px;height:4px;background:#c9a34e;"></div>
<div class="r" style="left:2806px;top:1080px;width:28px;height:4px;background:#c9a34e;"></div>
<div class="r" style="left:2806px;top:1092px;width:28px;height:4px;background:#c9a34e;"></div>
<div class="r" style="left:2806px;top:1189px;width:28px;height:4px;background:#c9a34e;"></div>
<div class="r" style="left:2806px;top:1202px;width:28px;height:4px;background:#c9a34e;"></div>
<div class="r" style="left:2806px;top:1336px;width:28px;height:4px;background:#c9a34e;"></div>
<div class="r" style="left:2814px;top:768px;width:14px;height:321px;border-radius:7px;background:rgba(110,112,118,0.55)"></div>
<div class="r" style="left:20px;top:1772px;width:2880px;height:2px;background:#1e1f22;"></div>
<div class="r" style="left:20px;top:1774px;width:2880px;height:46px;background:#2b2d30;"></div>
<svg class="s" style="left:46px;top:1789px" width="20" height="20" viewBox="0 0 20 20"><rect x="2" y="2" width="16" height="16" rx="3" fill="#253658" stroke="#548af7" stroke-width="2.4"/></svg>
<div class="t" style="left:72.6px;top:1784.3px;font-family:'Liberation Sans', sans-serif;font-size:25.6px;color:#a0a3a9;">fast-request-samples</div>
<div class="t" style="left:368.0px;top:1784.3px;font-family:'Liberation Sans', sans-serif;font-size:25.6px;color:#a0a3a9;">src</div>
<div class="t" style="left:452.0px;top:1784.3px;font-family:'Liberation Sans', sans-serif;font-size:25.6px;color:#a0a3a9;">main</div>
<div class="t" style="left:556.0px;top:1784.3px;font-family:'Liberation Sans', sans-serif;font-size:25.6px;color:#a0a3a9;">java</div>
<div class="t" style="left:652.0px;top:1784.3px;font-family:'Liberation Sans', sans-serif;font-size:25.6px;color:#a0a3a9;">io</div>
<div class="t" style="left:722.0px;top:1784.3px;font-family:'Liberation Sans', sans-serif;font-size:25.6px;color:#a0a3a9;">github</div>
<div class="t" style="left:844.0px;top:1784.3px;font-family:'Liberation Sans', sans-serif;font-size:25.6px;color:#a0a3a9;">kings1990</div>
<div class="t" style="left:1009.0px;top:1784.3px;font-family:'Liberation Sans', sans-serif;font-size:25.6px;color:#a0a3a9;">fastrequest</div>
<div class="t" style="left:1190.0px;top:1784.3px;font-family:'Liberation Sans', sans-serif;font-size:25.6px;color:#a0a3a9;">plugin</div>
<div class="t" style="left:1480.0px;top:1784.3px;font-family:'Liberation Sans', sans-serif;font-size:25.6px;color:#a0a3a9;">BookController</div>
<svg class="s" style="left:336px;top:1788px" width="14" height="20" viewBox="0 0 14 20"><path d="M3 3 L11 10 L3 17" fill="none" stroke="#a0a3a9" stroke-width="2"/></svg>
<svg class="s" style="left:419px;top:1788px" width="14" height="20" viewBox="0 0 14 20"><path d="M3 3 L11 10 L3 17" fill="none" stroke="#a0a3a9" stroke-width="2"/></svg>
<svg class="s" style="left:522px;top:1788px" width="14" height="20" viewBox="0 0 14 20"><path d="M3 3 L11 10 L3 17" fill="none" stroke="#a0a3a9" stroke-width="2"/></svg>
<svg class="s" style="left:620px;top:1788px" width="14" height="20" viewBox="0 0 14 20"><path d="M3 3 L11 10 L3 17" fill="none" stroke="#a0a3a9" stroke-width="2"/></svg>
<svg class="s" style="left:690px;top:1788px" width="14" height="20" viewBox="0 0 14 20"><path d="M3 3 L11 10 L3 17" fill="none" stroke="#a0a3a9" stroke-width="2"/></svg>
<svg class="s" style="left:812px;top:1788px" width="14" height="20" viewBox="0 0 14 20"><path d="M3 3 L11 10 L3 17" fill="none" stroke="#a0a3a9" stroke-width="2"/></svg>
<svg class="s" style="left:965px;top:1788px" width="14" height="20" viewBox="0 0 14 20"><path d="M3 3 L11 10 L3 17" fill="none" stroke="#a0a3a9" stroke-width="2"/></svg>
<svg class="s" style="left:1150px;top:1788px" width="14" height="20" viewBox="0 0 14 20"><path d="M3 3 L11 10 L3 17" fill="none" stroke="#a0a3a9" stroke-width="2"/></svg>
<svg class="s" style="left:1290px;top:1788px" width="14" height="20" viewBox="0 0 14 20"><path d="M3 3 L11 10 L3 17" fill="none" stroke="#a0a3a9" stroke-width="2"/></svg>
<svg class="s" style="left:1668px;top:1788px" width="14" height="20" viewBox="0 0 14 20"><path d="M3 3 L11 10 L3 17" fill="none" stroke="#a0a3a9" stroke-width="2"/></svg>
<svg class="s" style="left:1440px;top:1782px" width="28" height="28" viewBox="0 0 28 28"><circle cx="14" cy="14" r="12" fill="#253658" stroke="#548af7" stroke-width="2.2"/></svg>
<svg class="s" style="left:1699px;top:1781px" width="30" height="30" viewBox="0 0 30 30"><circle cx="15" cy="15" r="13" fill="#4a2326" stroke="#e55765" stroke-width="2.2"/><path d="M9 21 V12 M9 14 C9 10 15 10 15 14 V21 M15 14 C15 10 21 10 21 14 V21" fill="none" stroke="#e55765" stroke-width="2"/></svg>
<div class="t" style="left:1739.0px;top:1784.3px;font-family:'Liberation Sans', sans-serif;font-size:25.6px;color:#a0a3a9;">deleteBook</div>
<div class="t" style="left:2377.0px;top:1783.3px;font-family:'Liberation Sans', sans-serif;font-size:24.5px;color:#a0a3a9;">56:21</div>
<svg class="s" style="left:2472px;top:1784px" width="28" height="28" viewBox="0 0 28 28"><path d="M24 14.3 C24 13.5 23.9 12.8 23.8 12 H14 V16.5 H19.6 C19.3 18 18.5 19.2 17.3 20 V22.8 H20.7 C22.7 21 24 18 24 14.3 Z" fill="#4285f4"/><path d="M14 25 C16.8 25 19.1 24.1 20.7 22.8 L17.3 20 C16.4 20.6 15.3 21 14 21 C11.3 21 9 19.2 8.2 16.7 H4.7 V19.6 C6.4 22.9 9.9 25 14 25 Z" fill="#34a853"/><path d="M8.2 16.7 C8 16 7.9 15.3 7.9 14.5 C7.9 13.7 8 13 8.2 12.3 V9.4 H4.7 C4 10.9 3.6 12.6 3.6 14.5 C3.6 16.4 4 18.1 4.7 19.6 Z" fill="#fbbc05"/><path d="M14 8 C15.5 8 16.9 8.5 18 9.6 L21 6.6 C19.1 4.9 16.8 4 14 4 C9.9 4 6.4 6.1 4.7 9.4 L8.2 12.3 C9 9.8 11.3 8 14 8 Z" fill="#ea4335"/></svg>
<div class="t" style="left:2535.0px;top:1782.7px;font-family:'Liberation Sans', sans-serif;font-size:25.1px;color:#a0a3a9;">UTF-8</div>
<svg class="s" style="left:2641px;top:1783px" width="30" height="30" viewBox="0 0 30 30"><circle cx="15" cy="15" r="14" fill="#db5c5c"/><path d="M15 7 V17" stroke="#fff" stroke-width="3.4" stroke-linecap="round"/><circle cx="15" cy="22" r="2" fill="#fff"/></svg>
<div class="r" style="left:2688px;top:1774px;width:192px;height:46px;background:#1e1f22;"></div>
<div class="r" style="left:2688px;top:1774px;width:58px;height:46px;background:#253356;"></div>
<div class="t" style="left:2698.0px;top:1782.6px;font-family:'Liberation Sans', sans-serif;font-size:25.3px;color:#a0a3a9;">1241 of 4096M</div>
<div class="r" style="left:914px;top:50px;width:718px;height:1753px;border-radius:14px;background:#2b2d30;box-shadow:0 0 0 2px #3a3c41,0 0 16px 4px rgba(190,192,196,0.9)"></div>
<div class="t" style="left:978.5px;top:71.0px;font-family:'Liberation Sans', sans-serif;font-size:27.7px;color:#dfe1e5;">Show Apis</div>
<svg class="s" style="left:942px;top:74px" width="22" height="24" viewBox="0 0 30 34"><path fill="#f07fa0" d="M0 34 V13 C0 5 6 0 14 0 L19.3 1.3 L15.6 7.5 A6.2 6.2 0 1 0 17.2 17.8 L12.4 26.6 L8 25 V34 Z"/><path fill="#f07fa0" d="M22.6 3.7 L24.9 6 L20.6 13 L18.8 9.8 Z"/><path fill="#f07fa0" d="M26.6 10.1 C27.6 13 27.3 17 26 20 L20 30.7 L17.1 26.6 Z"/><path fill="#f07fa0" d="M23 34 L26.5 27.8 L30 34 Z"/></svg>
<div class="t" style="left:978.5px;top:119.0px;font-family:'Liberation Sans', sans-serif;font-size:27.7px;color:#dfe1e5;">Generate URL and Param</div>
<div class="t" style="left:1300px;width:311px;text-align:right;top:119.5px;font-family:'Liberation Sans', sans-serif;font-size:26px;color:#8c8f94">^\</div>
<svg class="s" style="left:930px;top:111px" width="45" height="42" viewBox="0 0 45 42"><defs><linearGradient id="gl" x1="0" y1="0" x2="0" y2="1"><stop offset="0" stop-color="#7de83a"/><stop offset="1" stop-color="#ffe22a"/></linearGradient><linearGradient id="gr" x1="0" y1="0" x2="0" y2="1"><stop offset="0" stop-color="#ff7a50"/><stop offset="1" stop-color="#ff1f4f"/></linearGradient></defs><path d="M16.8 11 L22.4 5.8 L27.6 11 Z" fill="#21d789"/><path d="M6 22.5 L11.8 15.5 V28.5 Z" fill="url(#gl)"/><path d="M38.3 23.3 L32 16 V29.5 Z" fill="#06a3f5"/><path d="M9 29.5 L13 36 L19.5 34.5 L19 31.5 Z" fill="#4a5cf7"/><path d="M18.5 33.5 H25.5 L23.7 38 H20.2 Z" fill="url(#gr)"/><path d="M25.5 32.5 L35 29 L37.3 30.5 L34.5 37 L26 34.5 Z" fill="#f8b417"/><rect x="12.3" y="12.1" width="19.3" height="18.5" fill="#1e1f22"/><path d="M18 28.5 V20 C18 16 24 14.5 25.5 17 L20.5 24" fill="none" stroke="#ffffff" stroke-width="3.2"/><path d="M23.5 16.5 L26 18 L21 24.5 L27 28.5" fill="none" stroke="#a8a8a8" stroke-width="2.6"/></svg>
<div class="t" style="left:978.5px;top:167.0px;font-family:'Liberation Sans', sans-serif;font-size:27.7px;color:#606368;">Toggle Highlight of All Occurrences</div>
<div class="t" style="left:1300px;width:311px;text-align:right;top:167.5px;font-family:'Liberation Sans', sans-serif;font-size:26px;color:#5a5d63"><svg width="22" height="22" viewBox="0 0 22 22" style="vertical-align:-2px;margin-left:5px"><path d="M1 3.5 H7 L15 18.5 H21 M13 3.5 H21" fill="none" stroke="#5a5d63" stroke-width="2"/></svg><svg width="22" height="22" viewBox="0 0 22 22" style="vertical-align:-2px;margin-left:5px"><path d="M7 7 V4.5 A2.5 2.5 0 1 0 4.5 7 H17.5 A2.5 2.5 0 1 0 15 4.5 V17.5 A2.5 2.5 0 1 0 17.5 15 H4.5 A2.5 2.5 0 1 0 7 17.5 Z" fill="none" stroke="#5a5d63" stroke-width="1.9"/></svg>F3</div>
<svg class="s" style="left:941px;top:169px" width="28" height="26" viewBox="0 0 28 26"><path d="M6 19 L20 4 L24 8 L10 23" fill="#5a5c60"/><rect x="2" y="21" width="22" height="4" fill="#5a5c60"/></svg>
<div class="t" style="left:978.5px;top:215.0px;font-family:'Liberation Sans', sans-serif;font-size:27.7px;color:#dfe1e5;">ConvertToJson</div>
<div class="t" style="left:978.5px;top:263.0px;font-family:'Liberation Sans', sans-serif;font-size:27.7px;color:#dfe1e5;">MavenDependencyHelper</div>
<div class="t" style="left:1300px;width:311px;text-align:right;top:263.5px;font-family:'Liberation Sans', sans-serif;font-size:26px;color:#8c8f94"><svg width="22" height="22" viewBox="0 0 22 22" style="vertical-align:-2px;margin-left:5px"><path d="M11 2 L20.5 11.5 H15.5 V19.5 H6.5 V11.5 H1.5 Z" fill="none" stroke="#8c8f94" stroke-width="1.9" stroke-linejoin="round"/></svg><svg width="22" height="22" viewBox="0 0 22 22" style="vertical-align:-2px;margin-left:5px"><path d="M7 7 V4.5 A2.5 2.5 0 1 0 4.5 7 H17.5 A2.5 2.5 0 1 0 15 4.5 V17.5 A2.5 2.5 0 1 0 17.5 15 H4.5 A2.5 2.5 0 1 0 7 17.5 Z" fill="none" stroke="#8c8f94" stroke-width="1.9"/></svg>D</div>
<div class="t" style="left:978.5px;top:311.0px;font-family:'Liberation Sans', sans-serif;font-size:27.7px;color:#dfe1e5;">Bito AI</div>
<svg class="s" style="left:1589px;top:315px" width="14" height="20" viewBox="0 0 14 20"><path d="M3 3 L11 10 L3 17" fill="none" stroke="#aeb1b6" stroke-width="2"/></svg>
<div class="t" style="left:978.5px;top:359.0px;font-family:'Liberation Sans', sans-serif;font-size:27.7px;color:#dfe1e5;">Show Context Actions</div>
<div class="t" style="left:1300px;width:311px;text-align:right;top:359.5px;font-family:'Liberation Sans', sans-serif;font-size:26px;color:#8c8f94"><svg width="22" height="22" viewBox="0 0 22 22" style="vertical-align:-2px;margin-left:5px"><path d="M1 3.5 H7 L15 18.5 H21 M13 3.5 H21" fill="none" stroke="#8c8f94" stroke-width="2"/></svg><svg width="22" height="22" viewBox="0 0 22 22" style="vertical-align:-2px;margin-left:5px"><path d="M20 3 V13 H7" fill="none" stroke="#8c8f94" stroke-width="2"/><path d="M1.5 13 L8 8 V18 Z" fill="#8c8f94"/></svg></div>
<svg class="s" style="left:942px;top:360px" width="22" height="30" viewBox="0 0 22 30"><path d="M11 2 A8 8 0 0 1 16 16 V20 H6 V16 A8 8 0 0 1 11 2 Z" fill="none" stroke="#dfe1e5" stroke-width="2"/><path d="M7 23 H15 M8 26 H14" stroke="#dfe1e5" stroke-width="2"/></svg>
<div class="r" style="left:934px;top:405px;width:678px;height:2px;background:#3c3e43;"></div>
<div class="t" style="left:978.5px;top:425.0px;font-family:'Liberation Sans', sans-serif;font-size:27.7px;color:#dfe1e5;">Paste</div>
<div class="t" style="left:1300px;width:311px;text-align:right;top:425.5px;font-family:'Liberation Sans', sans-serif;font-size:26px;color:#8c8f94"><svg width="22" height="22" viewBox="0 0 22 22" style="vertical-align:-2px;margin-left:5px"><path d="M7 7 V4.5 A2.5 2.5 0 1 0 4.5 7 H17.5 A2.5 2.5 0 1 0 15 4.5 V17.5 A2.5 2.5 0 1 0 17.5 15 H4.5 A2.5 2.5 0 1 0 7 17.5 Z" fill="none" stroke="#8c8f94" stroke-width="1.9"/></svg>V</div>
<svg class="s" style="left:940px;top:425px" width="26" height="30" viewBox="0 0 26 30"><rect x="2" y="4" width="22" height="24" rx="3" fill="none" stroke="#dfe1e5" stroke-width="2"/><rect x="8" y="2" width="10" height="5" rx="2" fill="#2b2d30" stroke="#dfe1e5" stroke-width="2"/><path d="M7 12 H19 M7 16 H19 M7 20 H19" stroke="#dfe1e5" stroke-width="2"/></svg>
<div class="t" style="left:978.5px;top:473.0px;font-family:'Liberation Sans', sans-serif;font-size:27.7px;color:#dfe1e5;">Copy / Paste Special</div>
<svg class="s" style="left:1589px;top:477px" width="14" height="20" viewBox="0 0 14 20"><path d="M3 3 L11 10 L3 17" fill="none" stroke="#aeb1b6" stroke-width="2"/></svg>
<div class="t" style="left:978.5px;top:521.0px;font-family:'Liberation Sans', sans-serif;font-size:27.7px;color:#dfe1e5;">Column Selection Mode</div>
<div class="t" style="left:1300px;width:311px;text-align:right;top:521.5px;font-family:'Liberation Sans', sans-serif;font-size:26px;color:#8c8f94"><svg width="22" height="22" viewBox="0 0 22 22" style="vertical-align:-2px;margin-left:5px"><path d="M11 2 L20.5 11.5 H15.5 V19.5 H6.5 V11.5 H1.5 Z" fill="none" stroke="#8c8f94" stroke-width="1.9" stroke-linejoin="round"/></svg><svg width="22" height="22" viewBox="0 0 22 22" style="vertical-align:-2px;margin-left:5px"><path d="M7 7 V4.5 A2.5 2.5 0 1 0 4.5 7 H17.5 A2.5 2.5 0 1 0 15 4.5 V17.5 A2.5 2.5 0 1 0 17.5 15 H4.5 A2.5 2.5 0 1 0 7 17.5 Z" fill="none" stroke="#8c8f94" stroke-width="1.9"/></svg>8</div>
<div class="r" style="left:934px;top:567px;width:678px;height:2px;background:#3c3e43;"></div>
<div class="t" style="left:978.5px;top:587.0px;font-family:'Liberation Sans', sans-serif;font-size:27.7px;color:#dfe1e5;">String Manipulation</div>
<svg class="s" style="left:1589px;top:591px" width="14" height="20" viewBox="0 0 14 20"><path d="M3 3 L11 10 L3 17" fill="none" stroke="#aeb1b6" stroke-width="2"/></svg>
<div class="r" style="left:934px;top:633px;width:678px;height:2px;background:#3c3e43;"></div>
<div class="t" style="left:978.5px;top:653.0px;font-family:'Liberation Sans', sans-serif;font-size:27.7px;color:#dfe1e5;">Go To</div>
<svg class="s" style="left:1589px;top:657px" width="14" height="20" viewBox="0 0 14 20"><path d="M3 3 L11 10 L3 17" fill="none" stroke="#aeb1b6" stroke-width="2"/></svg>
<div class="r" style="left:934px;top:699px;width:678px;height:2px;background:#3c3e43;"></div>
<div class="t" style="left:978.5px;top:719.0px;font-family:'Liberation Sans', sans-serif;font-size:27.7px;color:#dfe1e5;">Folding</div>
<svg class="s" style="left:1589px;top:723px" width="14" height="20" viewBox="0 0 14 20"><path d="M3 3 L11 10 L3 17" fill="none" stroke="#aeb1b6" stroke-width="2"/></svg>
<div class="t" style="left:978.5px;top:767.0px;font-family:'Liberation Sans', sans-serif;font-size:27.7px;color:#dfe1e5;">Analyze</div>
<svg class="s" style="left:1589px;top:771px" width="14" height="20" viewBox="0 0 14 20"><path d="M3 3 L11 10 L3 17" fill="none" stroke="#aeb1b6" stroke-width="2"/></svg>
<div class="r" style="left:934px;top:813px;width:678px;height:2px;background:#3c3e43;"></div>
<div class="t" style="left:978.5px;top:833.0px;font-family:'Liberation Sans', sans-serif;font-size:27.7px;color:#dfe1e5;">Refactor</div>
<svg class="s" style="left:1589px;top:837px" width="14" height="20" viewBox="0 0 14 20"><path d="M3 3 L11 10 L3 17" fill="none" stroke="#aeb1b6" stroke-width="2"/></svg>
<div class="t" style="left:978.5px;top:881.0px;font-family:'Liberation Sans', sans-serif;font-size:27.7px;color:#dfe1e5;">Generate...</div>
<div class="t" style="left:1300px;width:311px;text-align:right;top:881.5px;font-family:'Liberation Sans', sans-serif;font-size:26px;color:#8c8f94"><svg width="22" height="22" viewBox="0 0 22 22" style="vertical-align:-2px;margin-left:5px"><path d="M11 2 L20.5 11.5 H15.5 V19.5 H6.5 V11.5 H1.5 Z" fill="none" stroke="#8c8f94" stroke-width="1.9" stroke-linejoin="round"/></svg><svg width="22" height="22" viewBox="0 0 22 22" style="vertical-align:-2px;margin-left:5px"><path d="M7 7 V4.5 A2.5 2.5 0 1 0 4.5 7 H17.5 A2.5 2.5 0 1 0 15 4.5 V17.5 A2.5 2.5 0 1 0 17.5 15 H4.5 A2.5 2.5 0 1 0 7 17.5 Z" fill="none" stroke="#8c8f94" stroke-width="1.9"/></svg>S</div>
<div class="r" style="left:934px;top:927px;width:678px;height:2px;background:#3c3e43;"></div>
<div class="t" style="left:978.5px;top:947.0px;font-family:'Liberation Sans', sans-serif;font-size:27.7px;color:#dfe1e5;">Run Maven</div>
<svg class="s" style="left:1589px;top:951px" width="14" height="20" viewBox="0 0 14 20"><path d="M3 3 L11 10 L3 17" fill="none" stroke="#aeb1b6" stroke-width="2"/></svg>
<div class="t" style="left:978.5px;top:995.0px;font-family:'Liberation Sans', sans-serif;font-size:27.7px;color:#dfe1e5;">Debug Maven</div>
<svg class="s" style="left:1589px;top:999px" width="14" height="20" viewBox="0 0 14 20"><path d="M3 3 L11 10 L3 17" fill="none" stroke="#aeb1b6" stroke-width="2"/></svg>
<div class="t" style="left:978.5px;top:1043.0px;font-family:'Liberation Sans', sans-serif;font-size:27.7px;color:#dfe1e5;">Open Terminal at the Current Maven Module Path</div>
<svg class="s" style="left:936px;top:1041px" width="36" height="36" viewBox="0 0 36 36"><rect x="2" y="1" width="22" height="20" fill="#bdbec2"/><path d="M6 4.5 L11 9.5 L6 14.5" fill="none" stroke="#1e1f22" stroke-width="2"/><path d="M12.5 17 H19.5" stroke="#1e1f22" stroke-width="2.4"/><text x="12" y="32" font-family="Liberation Sans" font-weight="bold" font-style="italic" font-size="21" fill="#3a9be0" stroke="#2b2d30" stroke-width="3" paint-order="stroke">m</text></svg>
<div class="r" style="left:934px;top:1089px;width:678px;height:2px;background:#3c3e43;"></div>
<div class="t" style="left:978.5px;top:1109.0px;font-family:'Liberation Sans', sans-serif;font-size:27.7px;color:#dfe1e5;">Open in Split with Chooser...</div>
<div class="t" style="left:1300px;width:311px;text-align:right;top:1109.5px;font-family:'Liberation Sans', sans-serif;font-size:26px;color:#8c8f94"><svg width="22" height="22" viewBox="0 0 22 22" style="vertical-align:-2px;margin-left:5px"><path d="M1 3.5 H7 L15 18.5 H21 M13 3.5 H21" fill="none" stroke="#8c8f94" stroke-width="2"/></svg><svg width="22" height="22" viewBox="0 0 22 22" style="vertical-align:-2px;margin-left:5px"><path d="M11 2 L20.5 11.5 H15.5 V19.5 H6.5 V11.5 H1.5 Z" fill="none" stroke="#8c8f94" stroke-width="1.9" stroke-linejoin="round"/></svg><svg width="22" height="22" viewBox="0 0 22 22" style="vertical-align:-2px;margin-left:5px"><path d="M20 3 V13 H7" fill="none" stroke="#8c8f94" stroke-width="2"/><path d="M1.5 13 L8 8 V18 Z" fill="#8c8f94"/></svg></div>
<div class="t" style="left:978.5px;top:1157.0px;font-family:'Liberation Sans', sans-serif;font-size:27.7px;color:#dfe1e5;">Open In</div>
<svg class="s" style="left:1589px;top:1161px" width="14" height="20" viewBox="0 0 14 20"><path d="M3 3 L11 10 L3 17" fill="none" stroke="#aeb1b6" stroke-width="2"/></svg>
<div class="r" style="left:934px;top:1203px;width:678px;height:2px;background:#3c3e43;"></div>
<div class="t" style="left:978.5px;top:1223.0px;font-family:'Liberation Sans', sans-serif;font-size:27.7px;color:#dfe1e5;">Local History</div>
<svg class="s" style="left:1589px;top:1227px" width="14" height="20" viewBox="0 0 14 20"><path d="M3 3 L11 10 L3 17" fill="none" stroke="#aeb1b6" stroke-width="2"/></svg>
<div class="t" style="left:978.5px;top:1271.0px;font-family:'Liberation Sans', sans-serif;font-size:27.7px;color:#dfe1e5;">Git</div>
<svg class="s" style="left:1589px;top:1275px" width="14" height="20" viewBox="0 0 14 20"><path d="M3 3 L11 10 L3 17" fill="none" stroke="#aeb1b6" stroke-width="2"/></svg>
<div class="r" style="left:934px;top:1317px;width:678px;height:2px;background:#3c3e43;"></div>
<div class="t" style="left:978.5px;top:1337.0px;font-family:'Liberation Sans', sans-serif;font-size:27.7px;color:#dfe1e5;">External Tools</div>
<svg class="s" style="left:1589px;top:1341px" width="14" height="20" viewBox="0 0 14 20"><path d="M3 3 L11 10 L3 17" fill="none" stroke="#aeb1b6" stroke-width="2"/></svg>
<div class="t" style="left:978.5px;top:1385.0px;font-family:'Liberation Sans', sans-serif;font-size:27.7px;color:#dfe1e5;">Compare with Clipboard</div>
<svg class="s" style="left:940px;top:1385px" width="28" height="30" viewBox="0 0 28 30"><path d="M6 5 H3 V28 M20 5 H23 V10" fill="none" stroke="#dfe1e5" stroke-width="2"/><rect x="8" y="2" width="10" height="5" rx="2" fill="none" stroke="#dfe1e5" stroke-width="2"/><path d="M8 12 H18 M8 16 H16 M8 20 H12" stroke="#dfe1e5" stroke-width="2"/><path d="M27 17 H18 M21 14 L18 17 L21 20 M10 24 H19 M16 21 L19 24 L16 27" fill="none" stroke="#548af7" stroke-width="2"/></svg>
<div class="t" style="left:978.5px;top:1433.0px;font-family:'Liberation Sans', sans-serif;font-size:27.7px;color:#dfe1e5;">PsiViewer</div>
<svg class="s" style="left:1589px;top:1437px" width="14" height="20" viewBox="0 0 14 20"><path d="M3 3 L11 10 L3 17" fill="none" stroke="#aeb1b6" stroke-width="2"/></svg>
<div class="t" style="left:978.5px;top:1481.0px;font-family:'Liberation Sans', sans-serif;font-size:27.7px;color:#dfe1e5;">Diagrams</div>
<svg class="s" style="left:1589px;top:1485px" width="14" height="20" viewBox="0 0 14 20"><path d="M3 3 L11 10 L3 17" fill="none" stroke="#aeb1b6" stroke-width="2"/></svg>
<div class="r" style="left:934px;top:1527px;width:678px;height:2px;background:#3c3e43;"></div>
<div class="t" style="left:978.5px;top:1547.0px;font-family:'Liberation Sans', sans-serif;font-size:27.7px;color:#dfe1e5;">Create Gist...</div>
<svg class="s" style="left:938px;top:1547px" width="28" height="28" viewBox="0 0 28 28"><circle cx="14" cy="14" r="14" fill="#ffffff"/><path d="M6 6.5 L9.5 8.5 C12 7.8 16 7.8 18.5 8.5 L22 6.5 C22.5 8 22.8 9.5 22.5 11 C23.5 12.5 23.5 14 23 15.5 C22 18.5 19.5 20 16 20.5 L16 28.5 L11 28.5 L11 20.5 C7.5 20 5 18.5 4.5 15.5 C4 14 4.3 12.5 5.5 11 C5.2 9.5 5.4 8 6 6.5 Z" fill="#2b2d30"/><path d="M3 19 C4.5 20.5 5.5 22.3 7.5 22.8 C9 23.2 10 22.8 11.5 22.2" fill="none" stroke="#2b2d30" stroke-width="1.6"/></svg>
<div class="r" style="left:934px;top:1593px;width:678px;height:2px;background:#3c3e43;"></div>
<div class="t" style="left:978.5px;top:1613.0px;font-family:'Liberation Sans', sans-serif;font-size:27.7px;color:#dfe1e5;">Create Gist...</div>
<svg class="s" style="left:936px;top:1613px" width="34" height="32" viewBox="0 0 34 32"><path d="M3 6 A4 4 0 0 1 7 2 H32 V9 H11 V24 H24 V19 H17 V13 H32 V26 L28 30 H3 Z" fill="#d42a30"/></svg>
<div class="t" style="left:978.5px;top:1661.0px;font-family:'Liberation Sans', sans-serif;font-size:27.7px;color:#dfe1e5;">Add to .gitignore file (unignore)</div>
<svg class="s" style="left:937px;top:1662px" width="30" height="30" viewBox="0 0 30 30"><path d="M15 1 L29 15 L15 29 L1 15 Z" fill="#c9c9cc"/><path d="M11 8 L18 15 V21 M15 11 V21 M18 15" fill="none" stroke="#2b2d30" stroke-width="1.8"/><circle cx="15" cy="21" r="2" fill="#2b2d30"/><circle cx="18" cy="15" r="2" fill="#2b2d30"/></svg>
<div class="t" style="left:978.5px;top:1709.0px;font-family:'Liberation Sans', sans-serif;font-size:27.7px;color:#dfe1e5;">// Copy With Line Comment</div>
<div class="t" style="left:978.5px;top:1757.0px;font-family:'Liberation Sans', sans-serif;font-size:27.7px;color:#dfe1e5;">Copy Class.Method / File:LineNum</div>
<div class="r" style="left:1130px;top:57px;width:46px;height:46px;border-radius:50%;background:#f50c0c"></div>
<div class="t" style="left:1144.0px;top:66.4px;font-family:'Liberation Sans', sans-serif;font-size:29px;color:#ffffff;">1</div>
</div></body></html>
